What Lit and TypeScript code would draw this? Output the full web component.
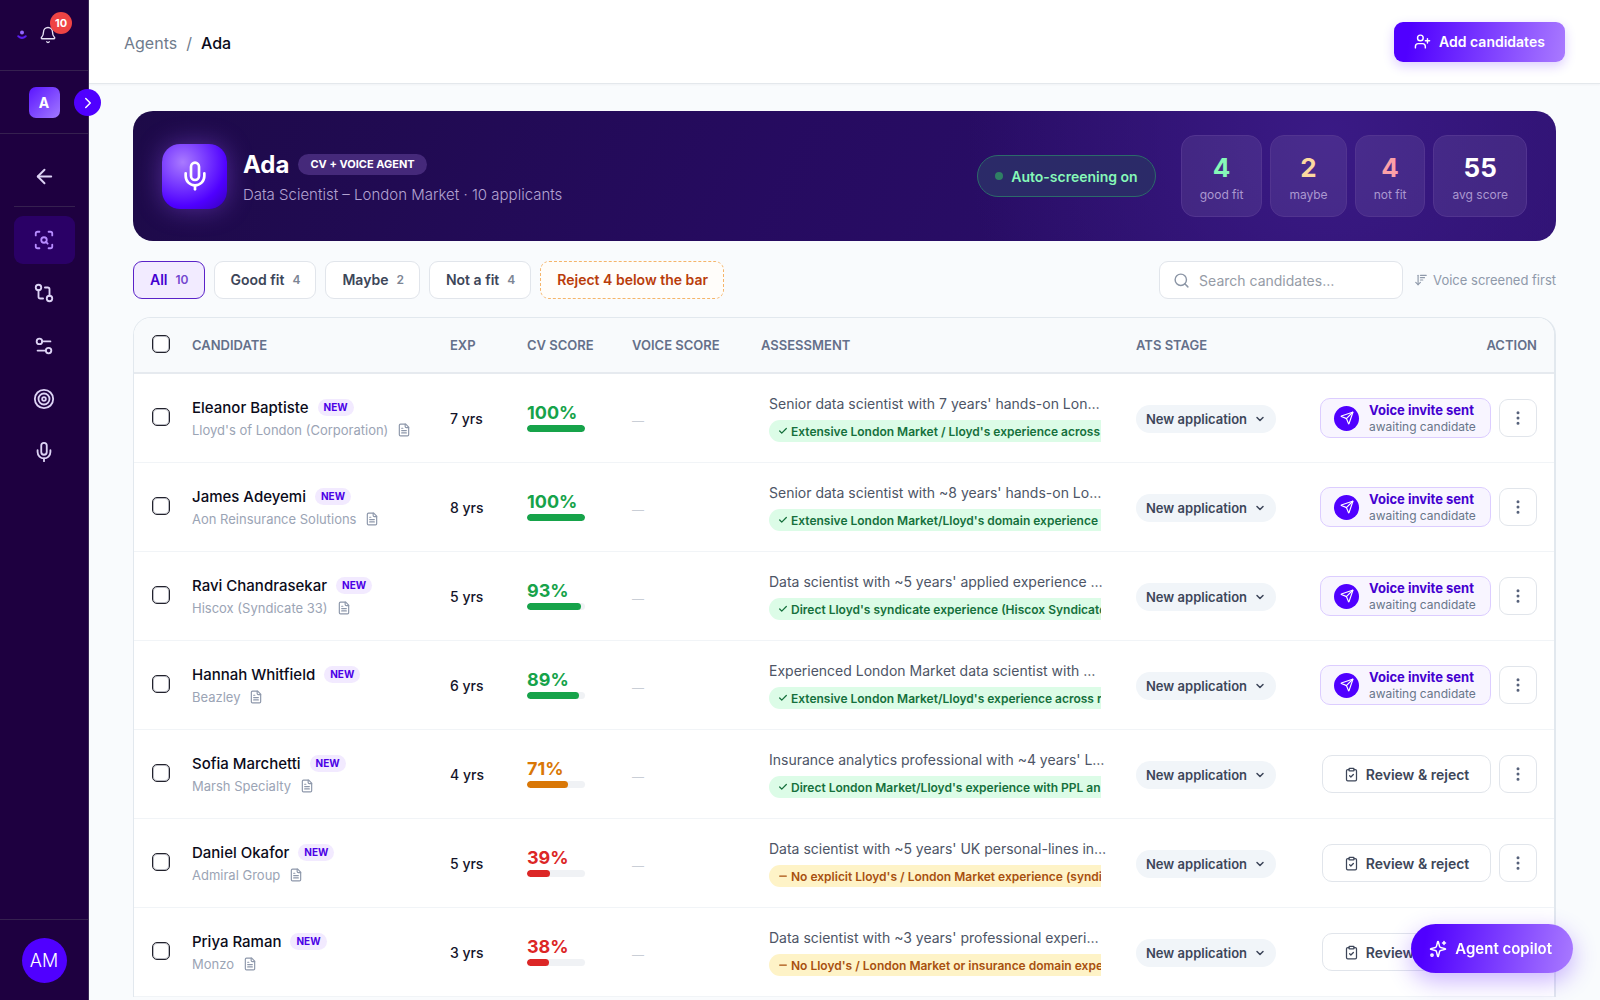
import { LitElement, html, css, svg } from "lit";
import { customElement, property, state } from "lit/decorators.js";
import { classMap } from "lit/directives/class-map.js";
import { styleMap } from "lit/directives/style-map.js";

const ICONS: Record<string, unknown> = {
  bell: svg`<path d="M10.268 21a2 2 0 0 0 3.464 0"/><path d="M3.262 15.326A1 1 0 0 0 4 17h16a1 1 0 0 0 .74-1.673C19.41 13.956 18 12.499 18 8A6 6 0 0 0 6 8c0 4.499-1.411 5.956-2.738 7.326"/>`,
  chevronRight: svg`<path d="m9 18 6-6-6-6"/>`,
  chevronDown: svg`<path d="m6 9 6 6 6-6"/>`,
  arrowLeft: svg`<path d="m12 19-7-7 7-7"/><path d="M19 12H5"/>`,
  scan: svg`<path d="M3 7V5a2 2 0 0 1 2-2h2"/><path d="M17 3h2a2 2 0 0 1 2 2v2"/><path d="M21 17v2a2 2 0 0 1-2 2h-2"/><path d="M7 21H5a2 2 0 0 1-2-2v-2"/><circle cx="12" cy="12" r="3"/><path d="m16 16-1.9-1.9"/>`,
  compare: svg`<circle cx="18" cy="18" r="3"/><circle cx="6" cy="6" r="3"/><path d="M13 6h3a2 2 0 0 1 2 2v7"/><path d="M11 18H8a2 2 0 0 1-2-2V9"/>`,
  settings: svg`<path d="M14 17H5"/><path d="M19 7h-9"/><circle cx="17" cy="17" r="3"/><circle cx="7" cy="7" r="3"/>`,
  target: svg`<circle cx="12" cy="12" r="10"/><circle cx="12" cy="12" r="6"/><circle cx="12" cy="12" r="2"/>`,
  mic: svg`<path d="M12 19v3"/><path d="M19 10v2a7 7 0 0 1-14 0v-2"/><rect x="9" y="2" width="6" height="13" rx="3"/>`,
  userPlus: svg`<path d="M16 21v-2a4 4 0 0 0-4-4H6a4 4 0 0 0-4 4v2"/><circle cx="9" cy="7" r="4"/><path d="M19 8v6"/><path d="M22 11h-6"/>`,
  search: svg`<circle cx="11" cy="11" r="8"/><path d="m21 21-4.3-4.3"/>`,
  sort: svg`<path d="m3 16 4 4 4-4"/><path d="M7 20V4"/><path d="M11 4h10"/><path d="M11 8h7"/><path d="M11 12h4"/>`,
  file: svg`<path d="M15 2H6a2 2 0 0 0-2 2v16a2 2 0 0 0 2 2h12a2 2 0 0 0 2-2V7Z"/><path d="M14 2v4a2 2 0 0 0 2 2h4"/><path d="M10 9H8"/><path d="M16 13H8"/><path d="M16 17H8"/>`,
  check: svg`<path d="M20 6 9 17l-5-5"/>`,
  minus: svg`<path d="M4 12h16"/>`,
  send: svg`<path d="M14.536 21.686a.5.5 0 0 0 .937-.024l6.5-19a.496.496 0 0 0-.635-.635l-19 6.5a.5.5 0 0 0-.024.937l7.93 3.18a2 2 0 0 1 1.112 1.11z"/><path d="m21.854 2.147-10.94 10.939"/>`,
  clipboard: svg`<rect x="8" y="2" width="8" height="4" rx="1"/><path d="M16 4h2a2 2 0 0 1 2 2v14a2 2 0 0 1-2 2H6a2 2 0 0 1-2-2V6a2 2 0 0 1 2-2h2"/><path d="m9 14 2 2 4-4"/>`,
  dots: svg`<circle cx="12" cy="12" r="1"/><circle cx="12" cy="5" r="1"/><circle cx="12" cy="19" r="1"/>`,
  sparkles: svg`<path d="M9.937 15.5A2 2 0 0 0 8.5 14.063l-6.135-1.582a.5.5 0 0 1 0-.962L8.5 9.936A2 2 0 0 0 9.937 8.5l1.582-6.135a.5.5 0 0 1 .963 0L14.063 8.5A2 2 0 0 0 15.5 9.937l6.135 1.581a.5.5 0 0 1 0 .964L15.5 14.063a2 2 0 0 0-1.437 1.437l-1.582 6.135a.5.5 0 0 1-.963 0z"/><path d="M20 2v4"/><path d="M22 4h-4"/><circle cx="4" cy="20" r="1.500"/>`,
};

const icon = (name: string, size: number, stroke = 2) => html`<svg
  width=${size} height=${size} viewBox="0 0 24 24" fill="none" stroke="currentColor"
  stroke-width=${stroke} stroke-linecap="round" stroke-linejoin="round" aria-hidden="true"
>${ICONS[name]}</svg>`;

type Level = "good" | "maybe" | "low";

interface Candidate {
  name: string;
  company: string;
  years: number;
  score: number;
  summary: string;
  tag: string;
  matched: boolean;
  invited: boolean;
}

const CANDIDATES: Candidate[] = [
  { name: "Eleanor Baptiste", company: "Lloyd's of London (Corporation)", years: 7, score: 100, summary: "Senior data scientist with 7 years' hands-on Lon…", tag: "Extensive London Market / Lloyd's experience across", matched: true, invited: true },
  { name: "James Adeyemi", company: "Aon Reinsurance Solutions", years: 8, score: 100, summary: "Senior data scientist with ~8 years' hands-on Lo…", tag: "Extensive London Market/Lloyd's domain experience", matched: true, invited: true },
  { name: "Ravi Chandrasekar", company: "Hiscox (Syndicate 33)", years: 5, score: 93, summary: "Data scientist with ~5 years' applied experience …", tag: "Direct Lloyd's syndicate experience (Hiscox Syndicate", matched: true, invited: true },
  { name: "Hannah Whitfield", company: "Beazley", years: 6, score: 89, summary: "Experienced London Market data scientist with …", tag: "Extensive London Market/Lloyd's experience across r", matched: true, invited: true },
  { name: "Sofia Marchetti", company: "Marsh Specialty", years: 4, score: 71, summary: "Insurance analytics professional with ~4 years' L…", tag: "Direct London Market/Lloyd's experience with PPL an", matched: true, invited: false },
  { name: "Daniel Okafor", company: "Admiral Group", years: 5, score: 39, summary: "Data scientist with ~5 years' UK personal-lines in…", tag: "No explicit Lloyd's / London Market experience (syndi", matched: false, invited: false },
  { name: "Priya Raman", company: "Monzo", years: 3, score: 38, summary: "Data scientist with ~3 years' professional experi…", tag: "No Lloyd's / London Market or insurance domain expe", matched: false, invited: false },
];

const level = (score: number): Level => (score >= 80 ? "good" : score >= 50 ? "maybe" : "low");

const base = css`
  *, *::before, *::after { box-sizing: border-box; }
  button, input, select { font: inherit; color: inherit; margin: 0; }
  button { cursor: pointer; }
  svg { display: block; flex: none; }
  a { color: inherit; text-decoration: none; }
`;

@customElement("app-sidebar")
export class AppSidebar extends LitElement {
  static styles = [base, css`
    :host { display: block; position: sticky; top: 0; height: 100vh; z-index: 2; }
    .bar { width: 89px; height: 100%; background: #1e0040; border-right: 1px solid #3a2a55; display: flex; flex-direction: column; color: #ddd3f5; }
    .top { height: 71px; border-bottom: 1px solid #35204f; display: flex; align-items: center; gap: 12px; padding-left: 17px; }
    .bell { position: relative; border: 0; background: none; padding: 0; color: #e6e0f4; }
    .count { position: absolute; left: 11px; top: -14px; width: 22px; height: 22px; border-radius: 50%; background: #ef4444; color: #fff; font-size: 11px; font-weight: 700; display: grid; place-items: center; }
    .org { height: 63px; border-bottom: 1px solid #35204f; display: flex; align-items: center; justify-content: center; position: relative; }
    .tile { width: 31px; height: 31px; border: 0; border-radius: 7px; background: linear-gradient(135deg, #5a14ff, #a27aff); color: #fff; font-weight: 700; font-size: 14px; padding: 0; }
    .toggle { position: absolute; right: -13px; top: 18px; width: 27px; height: 27px; border: 0; border-radius: 50%; background: #5000ff; color: #fff; display: grid; place-items: center; padding: 0; }
    .nav { display: flex; flex-direction: column; align-items: center; gap: 5px; padding: 19px 13px 0; flex: 1; }
    .item { width: 61px; height: 48px; border-radius: 9px; display: grid; place-items: center; }
    .back { border-bottom: 1px solid #35204f; height: 54px; padding-bottom: 6px; margin-bottom: 4px; width: 61px; display: grid; place-items: center; }
    .current { background: #2a0066; color: #b78cff; }
    .foot { height: 81px; border-top: 1px solid #35204f; display: grid; place-items: center; }
    .me { width: 45px; height: 45px; border-radius: 50%; border: 0; background: #5000ff; color: #fff; font-size: 18px; font-weight: 300; padding: 0; }
  `];

  render() {
    const items = [["scan", "Screening"], ["compare", "Pipelines"], ["settings", "Settings"], ["target", "Goals"], ["mic", "Voice"]];
    return html`<aside class="bar">
      <div class="top">
        <svg width="10" height="10" viewBox="0 0 10 10" aria-hidden="true">
          <circle cx="5" cy="2.600" r="2" fill="#9468ff"/>
          <path d="M1.300 6.200q3.700 3.400 7.400 0" stroke="#5a1cf0" stroke-width="2" stroke-linecap="round" fill="none"/>
        </svg>
        <button class="bell" aria-label="Notifications">${icon("bell", 18, 1.8)}<span class="count">10</span></button>
      </div>
      <div class="org">
        <button class="tile">A</button>
        <button class="toggle" aria-label="Expand menu">${icon("chevronRight", 18, 2)}</button>
      </div>
      <nav class="nav">
        <a class="back" href="#back" aria-label="Back">${icon("arrowLeft", 23, 2)}</a>
        ${items.map(([name, label], i) => html`<a href="#${name}" aria-label=${label} class=${classMap({ item: true, current: i === 0 })}>${icon(name, 22, 2)}</a>`)}
      </nav>
      <div class="foot"><button class="me">AM</button></div>
    </aside>`;
  }
}

@customElement("agent-hero")
export class AgentHero extends LitElement {
  static styles = [base, css`
    :host { display: block; }
    .hero { display: flex; align-items: center; border-radius: 20px; padding: 24px 29px; min-height: 130px; color: #fff;
      background: radial-gradient(circle at 84% 20%, #3a1a85 0, rgba(58, 26, 133, 0) 30%), linear-gradient(115deg, #1d0a48 0%, #260b60 45%, #2e1170 100%); }
    .orb { width: 65px; height: 65px; border-radius: 18px; display: grid; place-items: center; flex: none;
      background: radial-gradient(circle at 32% 28%, #a97aff 0, #7a3cff 35%, #4f00ff 68%, #3500b8 100%); box-shadow: 0 0 26px rgba(146, 84, 240, 0.45); }
    .text { margin-left: 16px; padding-top: 2px; display: flex; flex-direction: column; gap: 3px; flex: 1; min-width: 0; }
    .line { display: flex; align-items: center; gap: 9px; }
    h1 { margin: 0; font-size: 24px; line-height: 32px; font-weight: 700; }
    .kind { font-size: 11px; line-height: 21px; font-weight: 700; padding: 0 12px; border-radius: 11px; background: #45297a; }
    .sub { margin: 0; font-size: 15px; line-height: 22px; font-weight: 300; color: #b3a3d2; white-space: nowrap; }
    .auto { display: flex; align-items: center; gap: 8px; height: 42px; padding: 0 17px; border-radius: 21px; border: 1px solid #2c6a6a; background: #2b2a68; color: #86f8b8; font-size: 14px; font-weight: 600; }
    .dot { width: 8px; height: 8px; border-radius: 50%; background: #2f8064; }
    .stats { display: flex; gap: 8px; margin: 0 0 0 25px; }
    .stat { display: flex; flex-direction: column-reverse; align-items: center; justify-content: center; gap: 2px; height: 82px; padding: 4px 18px 0; border-radius: 14px; border: 1px solid #523490; background: rgba(255, 255, 255, 0.08); }
    dt { font-size: 12px; line-height: 18px; color: #ab98d0; }
    dd { margin: 0; font-size: 26px; line-height: 32px; font-weight: 700; }
    .good { color: #86f8b8; } .maybe { color: #fcd9a0; } .bad { color: #fca0a8; }
  `];

  render() {
    const stats = [["good fit", "4", "good"], ["maybe", "2", "maybe"], ["not fit", "4", "bad"], ["avg score", "55", ""]];
    return html`<section class="hero">
      <div class="orb">${icon("mic", 32, 2)}</div>
      <div class="text">
        <div class="line"><h1>Ada</h1><span class="kind">CV + VOICE AGENT</span></div>
        <p class="sub">Data Scientist – London Market · 10 applicants</p>
      </div>
      <button class="auto"><span class="dot"></span>Auto-screening on</button>
      <dl class="stats">${stats.map(([label, value, tone]) => html`<div class="stat"><dt>${label}</dt><dd class=${tone}>${value}</dd></div>`)}</dl>
    </section>`;
  }
}

@customElement("candidate-table")
export class CandidateTable extends LitElement {
  @property({ attribute: false }) rows: Candidate[] = [];

  static styles = [base, css`
    :host { display: block; }
    .card { border: 1px solid #e2e8ee; border-bottom: 0; border-right-width: 2px; border-radius: 18px 18px 0 0; background: #fff; overflow: hidden; }
    table { width: 100%; border-collapse: separate; border-spacing: 0; table-layout: fixed; }
    .c-check { width: 46px; } .c-name { width: 258px; } .c-exp { width: 77px; } .c-cv { width: 105px; }
    .c-voice { width: 129px; } .c-stage { width: 167px; } .c-action { width: 263px; }
    th { height: 56px; padding: 0 12px; background: #f8fafc; border-bottom: 2px solid #e6eaef; text-align: left; font-size: 13px; line-height: 16px; font-weight: 600; color: #64708a; white-space: nowrap; }
    td { height: 89px; padding: 1px 12px 0; border-bottom: 1px solid #f1f4f7; vertical-align: middle; }
    th:first-child, td:first-child { padding: 0 0 2px 18px; }
    th:last-child, td:last-child { padding: 0 17px 0 12px; text-align: right; }
    .tick { appearance: none; display: block; width: 18px; height: 18px; border: 1px solid #22222c; border-radius: 5px; background: #fff; box-shadow: inset 0 0 0 1px #b9bac2; }
    .who { display: flex; align-items: center; gap: 9px; font-size: 15px; line-height: 22px; font-weight: 500; color: #0b0b1a; white-space: nowrap; }
    .new { font-size: 10px; line-height: 17px; font-weight: 700; padding: 0 6px; border-radius: 9px; background: #f2eaff; color: #4b00e6; }
    .firm { display: flex; align-items: center; gap: 9px; font-size: 13px; line-height: 22px; color: #9ba4b5; white-space: nowrap; }
    .file { border: 0; background: none; padding: 0; color: #8d97aa; }
    .exp { font-size: 14px; line-height: 20px; font-weight: 500; color: #14142a; }
    .cv { padding-bottom: 4px; }
    .score { font-size: 18px; line-height: 24px; font-weight: 700; }
    .track { width: 58px; height: 7px; border-radius: 4px; background: #f0f2f5; overflow: hidden; }
    .fill { height: 100%; border-radius: 4px; background: currentColor; }
    .good { color: #16a34a; } .maybe { color: #d97706; } .low { color: #dc2626; }
    .none { padding-top: 4px; font-size: 12px; color: #c9ced6; }
    .assess { margin: 0 0 0 8px; padding-bottom: 2px; white-space: nowrap; }
    .summary { margin: 0 0 5px; font-size: 14px; line-height: 22px; color: #4d5566; }
    .clip { margin-right: 11px; overflow: hidden; }
    .tag { display: flex; align-items: center; gap: 3px; width: 120%; height: 22px; padding-left: 9px; border-radius: 11px; font-size: 12px; font-weight: 600; background: #dcfce7; color: #15703c; }
    .gap { background: #fef3c7; color: #a8500f; }
    .stage { display: inline-flex; align-items: center; position: relative; height: 28px; border-radius: 14px; background: #f1f5f9; color: #3d4659; }
    .stage select { appearance: none; border: 0; background: none; height: 28px; width: 140px; padding: 0 28px 0 10px; font-size: 13px; font-weight: 600; }
    .stage svg { position: absolute; right: 10px; pointer-events: none; }
    .acts { display: flex; justify-content: flex-end; align-items: center; gap: 8px; }
    .invite { display: flex; align-items: center; gap: 10px; width: 171px; height: 40px; padding: 0 13px; border: 1px solid #dccdff; border-radius: 10px; background: #f8f5ff; text-align: left; white-space: nowrap; }
    .plane { width: 25px; height: 25px; border-radius: 50%; background: #5000ff; color: #fff; display: grid; place-items: center; flex: none; }
    .sent { display: block; font-size: 13px; line-height: 17px; font-weight: 700; color: #4400d0; }
    .wait { display: block; font-size: 12px; line-height: 15px; color: #69758a; }
    .review { display: flex; align-items: center; justify-content: center; gap: 7px; width: 169px; height: 38px; border: 1px solid #e1e5eb; border-radius: 10px; background: #fff; font-size: 14px; font-weight: 600; color: #3d4659; padding: 0; }
    .more { width: 38px; height: 38px; border: 1px solid #e1e5eb; border-radius: 9px; background: #fff; color: #56617a; display: grid; place-items: center; padding: 0; }
  `];

  private row(c: Candidate) {
    return html`<tr>
      <td><input class="tick" type="checkbox" aria-label="Select ${c.name}"></td>
      <td>
        <div class="who">${c.name}<span class="new">NEW</span></div>
        <div class="firm">${c.company}<button class="file" aria-label="Open CV">${icon("file", 14, 2)}</button></div>
      </td>
      <td class="exp">${c.years} yrs</td>
      <td class="cv"><div class=${level(c.score)}>
        <div class="score">${c.score}%</div>
        <div class="track"><div class="fill" style=${styleMap({ width: `${c.score}%` })}></div></div>
      </div></td>
      <td class="none">—</td>
      <td><div class="assess">
        <p class="summary">${c.summary}</p>
        <div class="clip"><div class=${classMap({ tag: true, gap: !c.matched })}>${icon(c.matched ? "check" : "minus", 10, 3)}${c.tag}</div></div>
      </div></td>
      <td><span class="stage"><select aria-label="ATS stage for ${c.name}"><option>New application</option></select>${icon("chevronDown", 12, 3)}</span></td>
      <td><div class="acts">
        ${c.invited
          ? html`<button class="invite"><span class="plane">${icon("send", 14, 2)}</span><span><span class="sent">Voice invite sent</span><span class="wait">awaiting candidate</span></span></button>`
          : html`<button class="review">${icon("clipboard", 15, 2)}Review &amp; reject</button>`}
        <button class="more" aria-label="More actions">${icon("dots", 18, 2)}</button>
      </div></td>
    </tr>`;
  }

  render() {
    return html`<div class="card"><table>
      <colgroup><col class="c-check"><col class="c-name"><col class="c-exp"><col class="c-cv"><col class="c-voice"><col><col class="c-stage"><col class="c-action"></colgroup>
      <thead><tr>
        <th><input class="tick" type="checkbox" aria-label="Select all"></th>
        <th>CANDIDATE</th><th>EXP</th><th>CV SCORE</th><th>VOICE SCORE</th><th>ASSESSMENT</th><th>ATS STAGE</th><th>ACTION</th>
      </tr></thead>
      <tbody>${this.rows.map((c) => this.row(c))}</tbody>
    </table></div>`;
  }
}

@customElement("app-root")
export class AppRoot extends LitElement {
  @state() private tab = "All";

  static styles = [base, css`
    :host { display: flex; height: 100vh; overflow: hidden; background: #f9fbfd; font-family: Inter, "Liberation Sans", sans-serif; color: #0b0b1a; }
    .page { flex: 1; min-width: 0; }
    .header { height: 84px; display: flex; align-items: center; justify-content: space-between; padding: 0 35px; background: #fff; border-bottom: 1px solid #e4e8ec; box-shadow: 0 1px 2px rgba(20, 30, 50, 0.04); }
    .crumbs { display: flex; gap: 9px; padding-top: 2px; font-size: 16px; line-height: 24px; color: #707b8c; }
    .here { color: #0b0b1a; font-weight: 500; }
    .add { display: flex; align-items: center; justify-content: center; gap: 8px; width: 171px; height: 40px; border: 0; border-radius: 9px; padding: 0; color: #fff; font-size: 14px; font-weight: 600; background: linear-gradient(100deg, #5000ff 10%, #a97aff); box-shadow: 0 4px 12px rgba(80, 0, 255, 0.2); }
    .content { padding: 27px 44px 0; display: flex; flex-direction: column; }
    .tools { display: flex; align-items: center; gap: 9px; padding: 20px 0 18px; }
    .tab { display: flex; align-items: center; gap: 8px; height: 38px; padding: 0 15px 2px 16px; border: 1px solid #e1e5eb; border-radius: 9px; background: #fff; font-size: 14px; font-weight: 600; color: #3d4659; white-space: nowrap; }
    .n { font-size: 12px; color: #7d8594; }
    .on { border-color: #5a22c8; background: #f2ebff; color: #4400d0; }
    .on .n { color: #7448cf; }
    .reject { border: 1px dashed #f5b56a; background: #fffdfa; color: #b93c0a; }
    .find { margin-left: auto; display: flex; align-items: center; gap: 9px; width: 244px; height: 38px; padding: 0 13px; border: 1px solid #e1e5eb; border-radius: 9px; background: #fff; color: #8b95a5; }
    .find input { flex: 1; min-width: 0; border: 0; outline: 0; background: none; font-size: 14px; padding: 0; }
    .find input::placeholder { color: #959ba6; }
    .sort { display: flex; align-items: center; gap: 5px; border: 0; background: none; padding: 0 0 0 2px; font-size: 13px; color: #8f99aa; white-space: nowrap; }
    .copilot { position: fixed; right: 27px; bottom: 27px; z-index: 3; display: flex; align-items: center; gap: 8px; height: 49px; border: 0; border-radius: 25px; padding: 0 21px 0 18px; color: #fff; font-size: 15px; font-weight: 600; background: linear-gradient(100deg, #5000ff 10%, #a97aff); box-shadow: 0 8px 24px rgba(80, 0, 255, 0.3); }
  `];

  render() {
    const tabs: [string, number][] = [["All", 10], ["Good fit", 4], ["Maybe", 2], ["Not a fit", 4]];
    return html`
      <app-sidebar></app-sidebar>
      <div class="page">
        <header class="header">
          <nav class="crumbs"><a href="#agents">Agents</a><span>/</span><span class="here">Ada</span></nav>
          <button class="add">${icon("userPlus", 17, 2)}Add candidates</button>
        </header>
        <main class="content">
          <agent-hero></agent-hero>
          <div class="tools">
            ${tabs.map(([name, n]) => html`<button class=${classMap({ tab: true, on: this.tab === name })} @click=${() => { this.tab = name; }}>${name}<span class="n">${n}</span></button>`)}
            <button class="tab reject">Reject 4 below the bar</button>
            <label class="find">${icon("search", 17, 2)}<input type="search" aria-label="Search candidates" placeholder="Search candidates…"></label>
            <button class="sort">${icon("sort", 14, 2)}Voice screened first</button>
          </div>
          <candidate-table .rows=${CANDIDATES}></candidate-table>
        </main>
      </div>
      <button class="copilot">${icon("sparkles", 18, 2)}Agent copilot</button>
    `;
  }
}
